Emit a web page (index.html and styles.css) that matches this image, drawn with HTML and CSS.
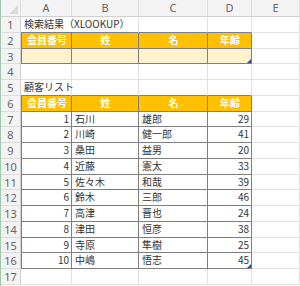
FILE: index.html
```html
<!DOCTYPE html>
<html lang="ja">
<head>
<meta charset="utf-8">
<link rel="stylesheet" href="styles.css">
</head>
<body>
<div class="sheet">
  <div class="ch corner"></div><div class="ch">A</div><div class="ch">B</div><div class="ch">C</div><div class="ch">D</div><div class="ch">E</div><div class="ch"></div>

  <div class="rh">1</div><div class="c span2 above">検索結果（XLOOKUP）</div><div class="c above"></div><div class="c above"></div><div class="c"></div><div class="c"></div>

  <div class="rh">2</div><div class="c th first">会員番号</div><div class="c th">姓</div><div class="c th">名</div><div class="c th">年齢</div><div class="c"></div><div class="c"></div>

  <div class="rh">3</div><div class="c in first"></div><div class="c in"></div><div class="c in"></div><div class="c in handle"></div><div class="c"></div><div class="c"></div>

  <div class="rh">4</div><div class="c"></div><div class="c"></div><div class="c"></div><div class="c"></div><div class="c"></div><div class="c"></div>

  <div class="rh">5</div><div class="c above">顧客リスト</div><div class="c above"></div><div class="c above"></div><div class="c above"></div><div class="c"></div><div class="c"></div>

  <div class="rh">6</div><div class="c th first">会員番号</div><div class="c th">姓</div><div class="c th">名</div><div class="c th">年齢</div><div class="c"></div><div class="c"></div>

  <div class="rh">7</div><div class="c td num first">1</div><div class="c td">石川</div><div class="c td">雄郎</div><div class="c td num">29</div><div class="c"></div><div class="c"></div>
  <div class="rh">8</div><div class="c td num first">2</div><div class="c td">川崎</div><div class="c td">健一郎</div><div class="c td num">41</div><div class="c"></div><div class="c"></div>
  <div class="rh">9</div><div class="c td num first">3</div><div class="c td">桑田</div><div class="c td">益男</div><div class="c td num">20</div><div class="c"></div><div class="c"></div>
  <div class="rh">10</div><div class="c td num first">4</div><div class="c td">近藤</div><div class="c td">憲太</div><div class="c td num">33</div><div class="c"></div><div class="c"></div>
  <div class="rh">11</div><div class="c td num first">5</div><div class="c td">佐々木</div><div class="c td">和哉</div><div class="c td num">39</div><div class="c"></div><div class="c"></div>
  <div class="rh">12</div><div class="c td num first">6</div><div class="c td">鈴木</div><div class="c td">三郎</div><div class="c td num">46</div><div class="c"></div><div class="c"></div>
  <div class="rh">13</div><div class="c td num first">7</div><div class="c td">高津</div><div class="c td">晋也</div><div class="c td num">24</div><div class="c"></div><div class="c"></div>
  <div class="rh">14</div><div class="c td num first">8</div><div class="c td">津田</div><div class="c td">恒彦</div><div class="c td num">38</div><div class="c"></div><div class="c"></div>
  <div class="rh">15</div><div class="c td num first">9</div><div class="c td">寺原</div><div class="c td">隼樹</div><div class="c td num">25</div><div class="c"></div><div class="c"></div>
  <div class="rh">16</div><div class="c td num first">10</div><div class="c td">中嶋</div><div class="c td">悟志</div><div class="c td num handle">45</div><div class="c"></div><div class="c"></div>

  <div class="rh">17</div><div class="c"></div><div class="c"></div><div class="c"></div><div class="c"></div><div class="c"></div><div class="c"></div>
</div>
</body>
</html>
```

FILE: styles.css
```css
html, body {
  margin: 0;
  padding: 0;
  background: #ffffff;
  overflow: hidden;
}

.sheet {
  width: 300px;
  height: 286px;
  overflow: hidden;
  display: grid;
  grid-template-columns: 20px 51px 67px 69px 44px 48px 40px;
  grid-template-rows: 17px repeat(17, 15.75px) 1fr;
  font-family: "Noto Sans CJK JP", "Noto Sans", sans-serif;
  font-size: 10px;
  color: #333333;
  border-left: 1px solid #9fc7a9;
}

.sheet > div {
  box-sizing: border-box;
  white-space: nowrap;
  line-height: 14px;
}

.ch {
  background: #f3f3f3;
  border-right: 1px solid #dcdcdc;
  border-bottom: 1px solid #d0d0d0;
  color: #666666;
  font-family: "Noto Sans", sans-serif;
  font-size: 11px;
  text-align: center;
  line-height: 16px !important;
}

.corner {
  position: relative;
}

.corner::after {
  content: "";
  position: absolute;
  right: 2px;
  bottom: 2px;
  width: 0;
  height: 0;
  border-left: 9px solid transparent;
  border-bottom: 9px solid #dadada;
}

.rh {
  background: #f3f3f3;
  border-right: 1px solid #d0d0d0;
  border-bottom: 1px solid #dcdcdc;
  color: #666666;
  font-family: "Noto Sans", sans-serif;
  font-size: 11px;
  text-align: center;
  line-height: 15px !important;
}

.c {
  border-right: 1px solid #e2e2e2;
  border-bottom: 1px solid #e2e2e2;
  padding: 0 2px 0 3px;
  overflow: visible;
}

.span2 {
  grid-column: span 2;
}

.above {
  border-bottom-color: #7f7f7f;
}

.th {
  background: #ffc000;
  color: #ffffff;
  font-weight: 700;
  text-align: center;
  border-right-color: #7f7f7f;
  border-bottom-color: #7f7f7f;
}

.in {
  background: #fff2cc;
  border-right-color: #7f7f7f;
  border-bottom-color: #7f7f7f;
}

.td {
  border-right-color: #7f7f7f;
  border-bottom-color: #7f7f7f;
}

.first {
  border-left: 1px solid #7f7f7f;
}

.num {
  text-align: right;
}

.handle {
  position: relative;
}

.handle::after {
  content: "";
  position: absolute;
  right: 0;
  bottom: 0;
  width: 0;
  height: 0;
  border-left: 4px solid transparent;
  border-bottom: 4px solid #2f4f9a;
}
```
